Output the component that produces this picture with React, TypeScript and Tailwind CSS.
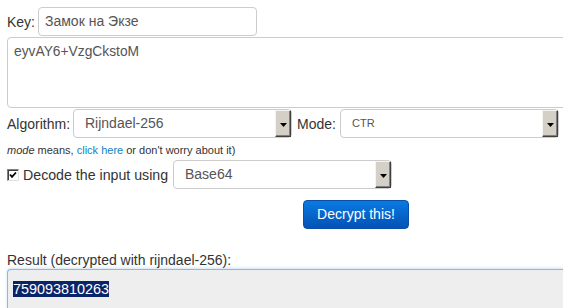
import React from "react";

function Arrow() {
  return (
    <div className="w-[16px] self-stretch bg-[#d4d0c8] border-t border-l border-t-[#f4f3ee] border-l-[#f4f3ee] border-r border-b border-r-[#404040] border-b-[#404040] shadow-[inset_-1px_-1px_0_#808080] flex items-center justify-center">
      <svg width="7" height="4" viewBox="0 0 7 4" className="mt-[2px]">
        <polygon points="0,0 7,0 3.5,4" fill="#000" />
      </svg>
    </div>
  );
}

function Select({ text, w, textCls }: { text: string; w: string; textCls: string }) {
  return (
    <div className={`${w} h-[29px] flex border border-[#cccccc] rounded-[4px] bg-white`}>
      <div className={`flex-1 flex items-center ${textCls}`}>{text}</div>
      <Arrow />
    </div>
  );
}

export default function App() {
  return (
    <div
      className="w-[563px] h-[308px] overflow-hidden bg-white pl-[7px] pt-[7px] text-[#333333]"
      style={{ fontFamily: '"Liberation Sans", Arial, sans-serif' }}
    >
      <div className="flex items-center h-[29px]">
        <span className="w-[31px] text-[14px] leading-[16px]">Key:</span>
        <div className="w-[219px] h-[29px] border border-[#cccccc] rounded-[4px] flex items-center pl-[6px] text-[14px] text-[#555555]">
          Замок на Экзе
        </div>
      </div>
      <div className="mt-[1px] w-[600px] h-[71px] border border-[#cccccc] rounded-[4px] pl-[6px] pt-[5px] text-[13.8px] leading-[18px] text-[#555555]">
        eyvAY6+VzgCkstoM
      </div>
      <div className="mt-[1px] flex items-center h-[29px]">
        <span className="w-[66px] text-[14px] leading-[16px]">Algorithm:</span>
        <Select text="Rijndael-256" w="w-[219px]" textCls="pl-[11px] text-[14px] text-[#555555]" />
        <span className="ml-[5px] w-[43px] text-[14px] leading-[16px]">Mode:</span>
        <Select text="CTR" w="w-[219px]" textCls="pl-[11px] text-[11px] text-[#555555]" />
      </div>
      <div className="mt-[5px] text-[11px] leading-[14px] text-[#333333]">
        <i>mode</i> means, <span className="text-[#0e7fc0]">click here</span> or don't worry about it)
      </div>
      <div className="mt-[3px] flex items-center h-[29px]">
        <div className="w-[12px] h-[12px] border border-t-[#808080] border-l-[#808080] border-r-[#e0e0e0] border-b-[#e0e0e0] bg-white shadow-[inset_1px_1px_0_#404040] flex items-center justify-center">
          <svg width="8" height="8" viewBox="0 0 8 8">
            <polyline points="1,3.5 3,5.8 7,1.5" fill="none" stroke="#000" strokeWidth="1.8" />
          </svg>
        </div>
        <span className="ml-[4px] w-[150px] text-[14.2px] leading-[16px]">Decode the input using</span>
        <Select text="Base64" w="w-[219px]" textCls="pl-[11px] text-[14px] text-[#555555]" />
      </div>
      <div className="mt-[11px] ml-[296px] w-[106px] h-[29px] rounded-[4px] bg-gradient-to-b from-[#0b7ae2] to-[#0452b5] border border-[#0a4fa8] flex items-center justify-center text-white text-[14px]">
        Decrypt this!
      </div>
      <div className="mt-[23px] text-[14px] leading-[16px] text-[#333333]">
        Result (decrypted with rijndael-256):
      </div>
      <div className="mt-[1px] w-[600px] h-[60px] bg-[#eeeeee] border border-[#8fb6e6] border-r-0 border-b-0 rounded-tl-[4px] shadow-[0_-1px_3px_rgba(120,170,230,0.35)] pl-[5px] pt-[7px]">
        <span className="bg-[#0a246a] text-white text-[14.4px] leading-[16px] inline-block">759093810263</span>
      </div>
    </div>
  );
}
